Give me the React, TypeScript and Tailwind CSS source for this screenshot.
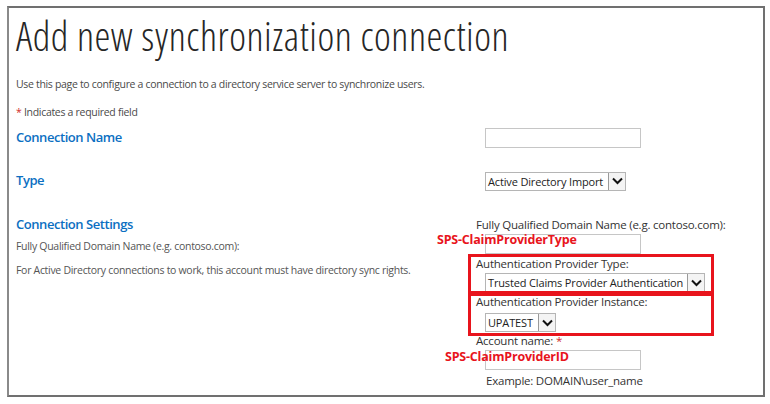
import React from "react";

const Chevron = () => (
  <svg width="11" height="8" viewBox="0 0 11 8" className="block">
    <path d="M1 1.5 L5.5 6 L10 1.5" fill="none" stroke="#111" strokeWidth="2" />
  </svg>
);

const Select = ({ text, width }: { text: string; width: string }) => (
  <div className={`ml-[9px] flex h-[19px] items-stretch border border-[#b5b5b5] bg-white ${width}`}>
    <div className="flex flex-1 items-center overflow-hidden whitespace-nowrap pl-[2px] text-[11px] leading-none tracking-[-0.15px] text-[#222]">
      {text}
    </div>
    <div className="flex w-[17px] items-center justify-center border-l border-[#9a9a9a] bg-[#f4f4f4]">
      <Chevron />
    </div>
  </div>
);

const Input = () => <div className="ml-[9px] h-[20px] w-[156px] border border-[#c6c6c6] bg-white" />;

export default function App() {
  return (
    <div className="relative h-[404px] w-[770px] overflow-hidden bg-white font-['Open_Sans',sans-serif]">
      <div className="absolute left-[7px] top-[6px] h-[391px] w-[758px] border-2 border-[#707070] border-l-[#8a8a8a]" />
      <div className="flex flex-col pl-[16px]">
        <div className="mt-[11px] h-[50px] whitespace-nowrap text-[40px] font-light leading-[50px] tracking-[0.55px] text-[#262626] [font-stretch:82%]">
          Add new synchronization connection
        </div>
        <div className="mt-[16px] h-[14px] text-[10.5px] leading-[14px] tracking-[-0.32px] text-[#4a4a4a]">
          Use this page to configure a connection to a directory service server to synchronize users.
        </div>
        <div className="mt-[14px] h-[14px] text-[10.5px] leading-[14px] tracking-[-0.3px] text-[#4a4a4a]">
          <span className="text-[#d12a2a]">*</span> Indicates a required field
        </div>
        <div className="mt-[7px] grid grid-cols-[460px_1fr]">
          <div className="flex h-[24px] items-center text-[13px] font-semibold tracking-[-0.45px] text-[#0b6fc2]">Connection Name</div>
          <div className="flex h-[24px] items-center"><Input /></div>
          <div className="mt-[19px] flex h-[24px] items-center text-[13px] font-semibold tracking-[-0.45px] text-[#0b6fc2]">Type</div>
          <div className="mt-[19px] flex h-[24px] items-center">
            <Select text="Active Directory Import" width="w-[141px]" />
          </div>
          <div className="mt-[21px] flex flex-col">
            <div className="h-[20px] text-[13px] font-semibold leading-[20px] tracking-[-0.45px] text-[#0b6fc2]">Connection Settings</div>
            <div className="mt-[4px] h-[16px] text-[10.5px] leading-[16px] tracking-[-0.3px] text-[#555]">Fully Qualified Domain Name (e.g. contoso.com):</div>
            <div className="mt-[8px] h-[16px] text-[10.5px] leading-[16px] tracking-[-0.3px] text-[#555]">For Active Directory connections to work, this account must have directory sync rights.</div>
          </div>
          <div className="mt-[24px] flex flex-col text-[11.5px] leading-[16px] tracking-[-0.22px] text-[#333]">
            <div className="h-[16px]">Fully Qualified Domain Name (e.g. contoso.com):</div>
            <div className="mt-[1px]"><Input /></div>
            <div className="mt-[2px] h-[16px]">Authentication Provider Type:</div>
            <div className="mt-[1px]"><Select text="Trusted Claims Provider Authentication" width="w-[220px]" /></div>
            <div className="mt-[2px] h-[16px]">Authentication Provider Instance:</div>
            <div className="mt-[3px]"><Select text="UPATEST" width="w-[71px]" /></div>
            <div className="mt-[1px] h-[16px]">Account name: <span className="text-[#d12a2a]">*</span></div>
            <div className="mt-[1px]"><Input /></div>
            <div className="mt-[3px] h-[16px] pl-[10px]">Example: DOMAIN\user_name</div>
          </div>
        </div>
      </div>
      <div className="absolute left-[468px] top-[254px] h-[40px] w-[246px] border-[3px] border-[#e8141c]" />
      <div className="absolute left-[468px] top-[293px] h-[43px] w-[246px] border-[3px] border-[#e8141c]" />
      <div className="absolute left-[437px] top-[231px] whitespace-nowrap text-[12.5px] font-bold leading-[18px] tracking-[-0.2px] text-[#e8141c]">SPS-ClaimProviderType</div>
      <div className="absolute left-[445px] top-[348px] whitespace-nowrap text-[12.5px] font-bold leading-[18px] tracking-[-0.2px] text-[#e8141c]">SPS-ClaimProviderID</div>
    </div>
  );
}
